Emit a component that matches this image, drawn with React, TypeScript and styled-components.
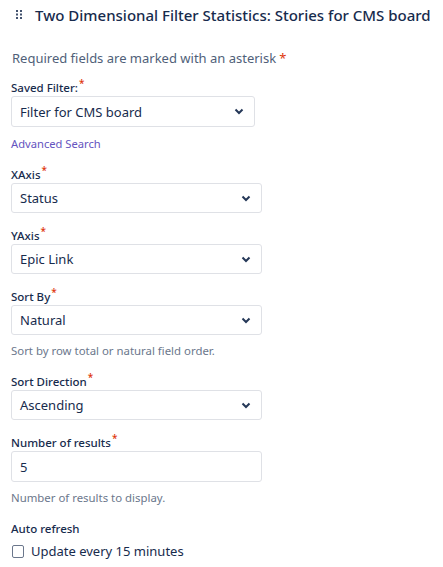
import React from 'react';
import styled, { createGlobalStyle } from 'styled-components';

const GlobalStyle = createGlobalStyle`
  html, body {
    margin: 0;
    padding: 0;
    background: #fff;
  }
  body {
    font-family: "Segoe UI", "Noto Sans", "Open Sans", sans-serif;
    color: #172b4d;
  }
`;

const Page = styled.div`
  width: 443px;
  padding: 0 0 0 11px;
  box-sizing: border-box;
`;

const Header = styled.div`
  display: flex;
  align-items: center;
  height: 29px;
  padding-left: 5px;
  gap: 13px;
`;

const Title = styled.h1`
  margin: 0;
  font-size: 15px;
  font-weight: 500;
  color: #172b4d;
  white-space: nowrap;
`;

const Intro = styled.p`
  margin: 19px 0 12px 1px;
  font-size: 13px;
  line-height: 20px;
  color: #505f79;
`;

const Star = styled.span<{ $raised?: boolean }>`
  color: #de350b;
  margin-left: ${(p) => (p.$raised ? '1px' : '3px')};
  font-size: ${(p) => (p.$raised ? '10px' : '13px')};
  position: relative;
  top: ${(p) => (p.$raised ? '-5px' : '0')};
`;

const Field = styled.div<{ $width: number }>`
  display: flex;
  flex-direction: column;
  width: ${(p) => p.$width}px;
  margin-bottom: 15px;
`;

const Label = styled.label`
  font-size: 11.5px;
  font-weight: 500;
  color: #172b4d;
  line-height: 16px;
`;

const SelectBox = styled.div<{ $height: number }>`
  display: flex;
  align-items: center;
  justify-content: space-between;
  height: ${(p) => p.$height}px;
  box-sizing: border-box;
  border: 1px solid #dfe1e6;
  border-radius: 3px;
  background: #fff;
  padding: 0 10px 0 8px;
  font-size: 13px;
  color: #172b4d;
`;

const Help = styled.div`
  font-size: 11.4px;
  line-height: 16px;
  color: #6b778c;
  margin-top: 8px;
`;

const LinkText = styled.a`
  font-size: 11.2px;
  line-height: 16px;
  color: #6554c0;
  text-decoration: none;
  margin-top: 9px;
`;

const CheckRow = styled.label`
  display: flex;
  align-items: center;
  gap: 7px;
  height: 24px;
  font-size: 13px;
  color: #172b4d;
  margin-top: 2px;
`;

const Box = styled.span`
  width: 10px;
  height: 11px;
  border: 1px solid #6b778c;
  border-radius: 2px;
  margin-left: 1px;
`;

function Chevron() {
  return (
    <svg width="10" height="7" viewBox="0 0 10 7">
      <path d="M1.5 1.5 L5 5 L8.5 1.5" fill="none" stroke="#253858" strokeWidth="2" />
    </svg>
  );
}

function DragHandle() {
  return (
    <svg width="6" height="9" viewBox="0 0 6 9">
      {[0, 1, 2].map((r) =>
        [0, 1].map((c) => (
          <rect key={`${r}${c}`} x={c * 4} y={r * 3.5} width="2" height="2" fill="#42526e" />
        ))
      )}
    </svg>
  );
}

function Select({ value, width, height = 30 }: { value: string; width: number; height?: number }) {
  return (
    <SelectBox $height={height} style={{ width }}>
      <span>{value}</span>
      <Chevron />
    </SelectBox>
  );
}

export default function App() {
  return (
    <Page>
      <GlobalStyle />
      <Header>
        <DragHandle />
        <Title>Two Dimensional Filter Statistics: Stories for CMS board</Title>
      </Header>
      <Intro>
        Required fields are marked with an asterisk<Star>*</Star>
      </Intro>

      <Field $width={244}>
        <Label>
          Saved Filter:<Star $raised>*</Star>
        </Label>
        <Select value="Filter for CMS board" width={244} height={31} />
        <LinkText href="#">Advanced Search</LinkText>
      </Field>

      <Field $width={251}>
        <Label>
          XAxis<Star $raised>*</Star>
        </Label>
        <Select value="Status" width={251} />
      </Field>

      <Field $width={251}>
        <Label>
          YAxis<Star $raised>*</Star>
        </Label>
        <Select value="Epic Link" width={251} />
      </Field>

      <Field $width={251}>
        <Label>
          Sort By<Star $raised>*</Star>
        </Label>
        <Select value="Natural" width={251} />
        <Help>Sort by row total or natural field order.</Help>
      </Field>

      <Field $width={251}>
        <Label>
          Sort Direction<Star $raised>*</Star>
        </Label>
        <Select value="Ascending" width={251} />
      </Field>

      <Field $width={251}>
        <Label>
          Number of results<Star $raised>*</Star>
        </Label>
        <SelectBox $height={31}>
          <span>5</span>
        </SelectBox>
        <Help>Number of results to display.</Help>
      </Field>

      <Field $width={251}>
        <Label>Auto refresh</Label>
        <CheckRow>
          <Box />
          Update every 15 minutes
        </CheckRow>
      </Field>
    </Page>
  );
}
